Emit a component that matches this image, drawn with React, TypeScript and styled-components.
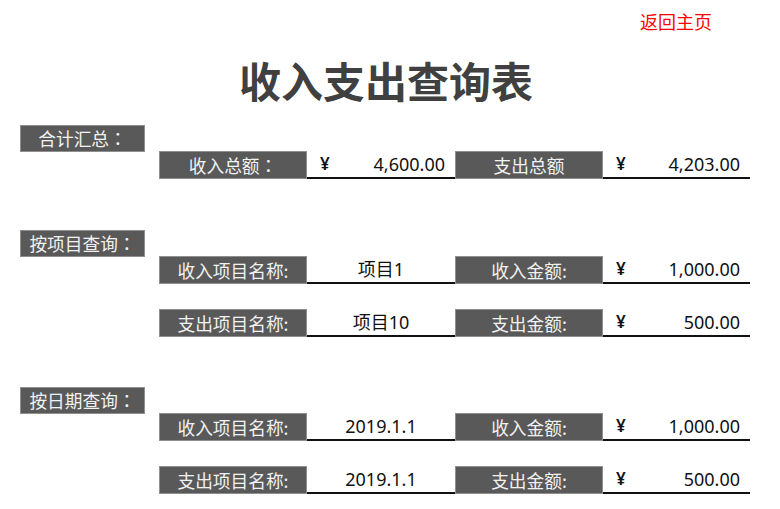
import React from "react";
import styled, { createGlobalStyle } from "styled-components";

const Global = createGlobalStyle`
  html, body { margin: 0; padding: 0; background: #ffffff; }
  body { font-family: "Noto Sans", "Noto Sans CJK SC", sans-serif; }
`;

const Page = styled.div`
  width: 780px;
  height: 509px;
  box-sizing: border-box;
  padding-left: 20px;
  overflow: hidden;
`;

const TopBar = styled.div`
  display: flex;
  justify-content: flex-end;
  padding: 10px 68px 0 0;
`;

const HomeLink = styled.a`
  font-family: "Noto Sans CJK SC", sans-serif;
  font-size: 18px;
  line-height: 22px;
  color: #ff0000;
  text-decoration: none;
  cursor: pointer;
`;

const Title = styled.h1`
  margin: 23px 0 0 -20px;
  font-family: "Noto Sans CJK SC", sans-serif;
  font-weight: 700;
  font-size: 42px;
  line-height: 50px;
  color: #404040;
  text-align: center;
  padding-right: 8px;
`;

const Section = styled.section<{ $top: number }>`
  margin-top: ${(p) => p.$top}px;
  display: flex;
  flex-direction: column;
`;

const SectionLabel = styled.div`
  width: 125px;
  height: 27px;
  box-sizing: border-box;
  background: #595959;
  border: 1px solid #8f8f8f;
  color: #f2f2f2;
  font-family: "Noto Sans CJK SC", sans-serif;
  font-size: 17.7px;
  line-height: 25px;
  text-align: center;
  white-space: nowrap;
`;

const Colon = styled.span`
  font-family: "Noto Sans CJK TC", sans-serif;
`;

const Rows = styled.div`
  margin: -1px 0 0 139px;
  display: flex;
  flex-direction: column;
  gap: 25px;
`;

const Row = styled.div`
  display: grid;
  grid-template-columns: 148px 148px 148px 147px;
  height: 28px;
`;

const CellLabel = styled.div`
  box-sizing: border-box;
  background: #595959;
  border: 1px solid #8f8f8f;
  color: #f2f2f2;
  font-family: "Noto Sans CJK SC", sans-serif;
  font-size: 17.7px;
  line-height: 26px;
  text-align: center;
  white-space: nowrap;
`;

const CellValue = styled.div<{ $money?: boolean }>`
  box-sizing: border-box;
  border-bottom: 2px solid #111111;
  color: #111111;
  font-family: "Noto Sans", "Noto Sans CJK SC", sans-serif;
  font-size: 18px;
  line-height: 26px;
  display: flex;
  justify-content: ${(p) => (p.$money ? "space-between" : "center")};
  padding: ${(p) => (p.$money ? "0 10px 0 13px" : "0")};
`;

const Yen = styled.span`
  font-size: 17px;
  font-weight: 600;
`;

const withColon = (text: string) =>
  text.endsWith("：") ? (
    <>
      {text.slice(0, -1)}
      <Colon>：</Colon>
    </>
  ) : (
    text
  );

type Item = { label: string; value: string; money?: boolean };

const Field: React.FC<Item> = ({ label, value, money }) => (
  <>
    <CellLabel>{withColon(label)}</CellLabel>
    <CellValue $money={money}>
      {money ? (
        <>
          <Yen>¥</Yen>
          <span>{value}</span>
        </>
      ) : (
        value
      )}
    </CellValue>
  </>
);

const sections: { title: string; top: number; rows: Item[][] }[] = [
  {
    title: "合计汇总：",
    top: 20,
    rows: [
      [
        { label: "收入总额：", value: "4,600.00", money: true },
        { label: "支出总额", value: "4,203.00", money: true },
      ],
    ],
  },
  {
    title: "按项目查询：",
    top: 51,
    rows: [
      [
        { label: "收入项目名称:", value: "项目1" },
        { label: "收入金额:", value: "1,000.00", money: true },
      ],
      [
        { label: "支出项目名称:", value: "项目10" },
        { label: "支出金额:", value: "500.00", money: true },
      ],
    ],
  },
  {
    title: "按日期查询：",
    top: 50,
    rows: [
      [
        { label: "收入项目名称:", value: "2019.1.1" },
        { label: "收入金额:", value: "1,000.00", money: true },
      ],
      [
        { label: "支出项目名称:", value: "2019.1.1" },
        { label: "支出金额:", value: "500.00", money: true },
      ],
    ],
  },
];

export default function App() {
  return (
    <Page>
      <Global />
      <TopBar>
        <HomeLink>返回主页</HomeLink>
      </TopBar>
      <Title>收入支出查询表</Title>
      {sections.map((s) => (
        <Section key={s.title} $top={s.top}>
          <SectionLabel>{withColon(s.title)}</SectionLabel>
          <Rows>
            {s.rows.map((r, i) => (
              <Row key={i}>
                {r.map((f) => (
                  <Field key={f.label} {...f} />
                ))}
              </Row>
            ))}
          </Rows>
        </Section>
      ))}
    </Page>
  );
}
